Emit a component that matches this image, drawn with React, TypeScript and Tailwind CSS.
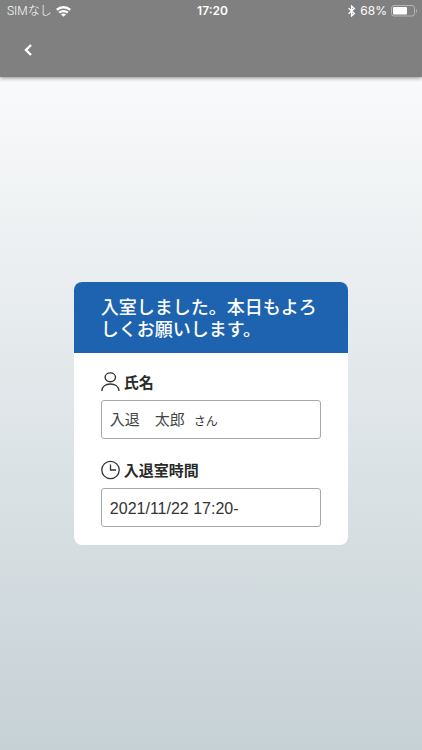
import { useId } from 'react'
import type { ReactNode } from 'react'

function WifiIcon() {
  return (
    <svg viewBox="0 0 15 11" className="w-[15px] h-[11px]" fill="none" stroke="currentColor" strokeWidth="2.3" aria-hidden="true">
      <path d="M.8 3.800C4.500.4 10.500.4 14.200 3.800" />
      <path d="M3.200 6.700c2.400-2.200 6.200-2.200 8.600 0" />
      <path d="M7.500 10.800 5 8.500c1.400-1.200 3.600-1.200 5 0z" fill="currentColor" stroke="none" />
    </svg>
  )
}

function BluetoothIcon() {
  return (
    <svg viewBox="0 0 8 12" className="w-2 h-3" fill="none" stroke="currentColor" strokeWidth="1.3" aria-hidden="true">
      <path d="M.6 3.300 6.300 8.600 3.600 11V1l2.700 2.400L.6 8.700" />
    </svg>
  )
}

function BatteryIcon() {
  return (
    <svg viewBox="0 0 27 12" className="w-[27px] h-3" aria-hidden="true">
      <rect x=".5" y=".5" width="23" height="10.500" rx="2.500" fill="none" stroke="#b4b4b4" />
      <rect x="2" y="2" width="14" height="7.500" rx="1" fill="#fff" />
      <path d="M25 4v3.800c1.600-.6 1.600-3.200 0-3.800z" fill="#b4b4b4" />
    </svg>
  )
}

function UserIcon() {
  return (
    <svg viewBox="0 0 20 20" className="w-5 h-5" fill="none" stroke="#333" strokeWidth="1.4" aria-hidden="true">
      <ellipse cx="9.300" cy="5.300" rx="5.200" ry="4.400" />
      <path d="M.8 19c.3-4.600 4-7 8.600-7s8.300 2.400 8.600 7" />
    </svg>
  )
}

function ClockIcon() {
  return (
    <svg viewBox="0 0 20 20" className="w-5 h-5" fill="none" stroke="#333" strokeWidth="1.3" aria-hidden="true">
      <circle cx="9.500" cy="10" r="8.700" />
      <path d="M9.500 4.500V10H15" />
    </svg>
  )
}

type FieldProps = {
  label: string
  icon: ReactNode
  value: string
  suffix?: string
  inputClass: string
}

function Field({ label, icon, value, suffix, inputClass }: FieldProps) {
  const id = useId()
  return (
    <div>
      <label htmlFor={id} className="flex items-center gap-[3px] h-5 text-[15px] font-bold text-[#2a2a2a]">
        {icon}
        <span className="pt-[2px]">{label}</span>
      </label>
      <div className="mt-2 flex items-center gap-1 h-[39px] px-2 pt-[2px] border border-[#a8a8a8] rounded-[3px]">
        <input id={id} readOnly value={value} className={`min-w-0 bg-transparent outline-none ${inputClass}`} />
        {suffix && <span className="pt-[2px] text-xs text-[#333]">{suffix}</span>}
      </div>
    </div>
  )
}

export default function App() {
  return (
    <div className="min-h-screen flex flex-col bg-linear-to-b from-white to-[#c6d1d6] font-['Liberation_Sans','Noto_Sans_CJK_JP',sans-serif]">
      <header className="bg-[#808080] text-white shadow-[0_1px_4px_rgba(0,0,0,0.45)]">
        <div className="grid grid-cols-3 items-center h-[22px] pl-[7px] pr-1 text-xs font-['Inter','Noto_Sans_CJK_JP',sans-serif]">
          <div className="flex items-center gap-1 font-light">
            <span className="font-['Roboto','Noto_Sans_CJK_JP',sans-serif]">SIMなし</span>
            <WifiIcon />
          </div>
          <time className="text-center font-semibold">17:20</time>
          <div className="flex items-center justify-end gap-1">
            <BluetoothIcon />
            <span>68%</span>
            <BatteryIcon />
          </div>
        </div>
        <nav className="flex items-center h-[55px] px-4">
          <button type="button" aria-label="戻る" className="flex items-center justify-center w-6 h-6">
            <svg viewBox="0 0 8 12" className="w-2 h-3" fill="none" stroke="currentColor" strokeWidth="2.4" aria-hidden="true">
              <path d="M7 1 2 6l5 5" />
            </svg>
          </button>
        </nav>
      </header>

      <main className="flex-1 flex items-center justify-center">
        <section className="w-[65%] max-w-md rounded-lg overflow-hidden bg-white">
          <h1 className="bg-[#1e63b0] text-white text-lg leading-[22px] font-medium pl-[27px] pr-6 pt-[15px] pb-3">
            入室しました。本日もよろしくお願いします。
          </h1>
          <div className="flex flex-col gap-[21px] px-[27px] pt-[19px] pb-[18px]">
            <Field
              label="氏名"
              icon={<UserIcon />}
              value="入退　太郎"
              suffix="さん"
              inputClass="w-20 text-[15px] text-[#444]"
            />
            <Field
              label="入退室時間"
              icon={<ClockIcon />}
              value="2021/11/22 17:20-"
              inputClass="w-full text-base text-[#333]"
            />
          </div>
        </section>
      </main>
    </div>
  )
}
